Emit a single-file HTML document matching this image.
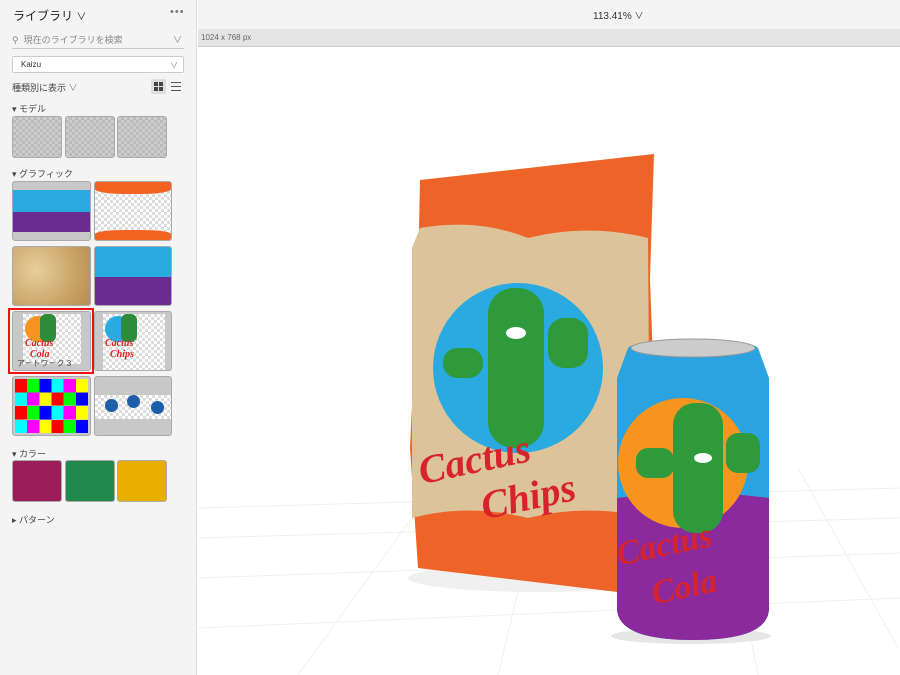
<!DOCTYPE html>
<html><head><meta charset="utf-8"><style>
*{margin:0;padding:0;box-sizing:border-box}
body{width:900px;height:675px;overflow:hidden;background:#fff;font-family:"Liberation Sans","Noto Sans CJK JP",sans-serif;position:relative;font-size:10px;color:#333}
.sb{position:absolute;left:0;top:0;width:197px;height:675px;background:#f4f4f4;border-right:1px solid #ddd}
.abs{position:absolute}
.t{border-radius:3px;border:1px solid #aaa;position:absolute;overflow:hidden;background:#c8c8c8}
.chk{background-color:#ccc;background-image:linear-gradient(45deg,#bbb 25%,transparent 25%,transparent 75%,#bbb 75%),linear-gradient(45deg,#bbb 25%,transparent 25%,transparent 75%,#bbb 75%);background-size:6px 6px;background-position:0 0,3px 3px}
.chkw{background-color:#fff;background-image:linear-gradient(45deg,#ddd 25%,transparent 25%,transparent 75%,#ddd 75%),linear-gradient(45deg,#ddd 25%,transparent 25%,transparent 75%,#ddd 75%);background-size:6px 6px;background-position:0 0,3px 3px}
.lbl{position:absolute;left:12px;font-size:9px;color:#444}
</style></head><body>
<div class="sb">
 <div class="abs" style="left:13px;top:7px;font-size:12px;color:#222">ライブラリ <span style="font-size:10px">∨</span></div>
 <div class="abs" style="left:170px;top:6px;font-size:11px;color:#777;letter-spacing:1px">•••</div>
 <div class="abs" style="left:12px;top:33px;width:172px;height:16px;border-bottom:1px solid #ccc;font-size:9px;color:#888">⚲ &nbsp;現在のライブラリを検索<span style="position:absolute;right:2px">∨</span></div>
 <div class="abs" style="left:12px;top:56px;width:172px;height:17px;border:1px solid #ccc;background:#fff;border-radius:2px;font-size:8px;color:#333;padding:3px 8px">Kaizu<span style="position:absolute;right:5px;color:#888">∨</span></div>
 <div class="abs" style="left:12px;top:81px;font-size:9px;color:#444">種類別に表示 <span style="color:#888">∨</span></div>
 <div class="abs" style="left:151px;top:79px;width:15px;height:15px;background:#ddd;border-radius:2px"></div>
 <div class="abs" style="left:154px;top:82px;width:9px;height:9px;background:linear-gradient(#444 0 4px,transparent 4px 5px,#444 5px);"></div>
 <div class="abs" style="left:158px;top:82px;width:1px;height:9px;background:#ddd"></div>
 <div class="abs" style="left:171px;top:82px;width:10px;height:9px;background:repeating-linear-gradient(#555 0 1px,transparent 1px 4px)"></div>
 <div class="lbl" style="top:102px">▾ モデル</div>
 <div class="t chk" style="left:12px;top:116px;width:50px;height:42px"></div>
 <div class="t chk" style="left:65px;top:116px;width:50px;height:42px"></div>
 <div class="t chk" style="left:117px;top:116px;width:50px;height:42px"></div>
 <div class="lbl" style="top:167px">▾ グラフィック</div>
 <div class="t" style="left:12px;top:181px;width:79px;height:60px"><div style="height:8px"></div><div style="height:22px;background:#29abe2"></div><div style="height:20px;background:#6a2c91"></div></div>
 <div class="t chkw" style="left:94px;top:181px;width:78px;height:60px"><div style="height:12px;background:#f26322;border-radius:0 0 40% 40%"></div><div style="position:absolute;bottom:0;left:0;right:0;height:10px;background:#f26322;border-radius:40% 40% 0 0"></div></div>
 <div class="t" style="left:12px;top:246px;width:79px;height:60px;background:radial-gradient(circle at 30% 40%,#e8cf9a,#c9a468 60%,#b58d50)"></div>
 <div class="t" style="left:94px;top:246px;width:78px;height:60px"><div style="height:30px;background:#29abe2"></div><div style="height:30px;background:#6a2c91"></div></div>
 <div class="t" style="left:12px;top:311px;width:79px;height:60px"><div class="chkw" style="position:absolute;left:10px;top:2px;width:58px;height:50px"></div><div style="position:absolute;left:12px;top:4px;width:26px;height:26px;border-radius:50%;background:#f7941d"></div><div style="position:absolute;left:27px;top:2px;width:16px;height:28px;border-radius:6px;background:#2e8b3a"></div><div style="position:absolute;left:12px;top:26px;color:#d22;font:italic bold 10px 'Liberation Serif',serif">Cactus<br>&nbsp;&nbsp;Cola</div><div style="position:absolute;left:4px;bottom:1px;font-size:8px;color:#444">アートワーク 3</div></div>
 <div class="abs" style="left:8px;top:308px;width:86px;height:66px;border:2px solid #e11"></div>
 <div class="t" style="left:94px;top:311px;width:78px;height:60px"><div class="chkw" style="position:absolute;left:8px;top:2px;width:62px;height:56px"></div><div style="position:absolute;left:10px;top:4px;width:26px;height:26px;border-radius:50%;background:#29abe2"></div><div style="position:absolute;left:26px;top:2px;width:16px;height:28px;border-radius:6px;background:#2e8b3a"></div><div style="position:absolute;left:10px;top:26px;color:#d22;font:italic bold 10px 'Liberation Serif',serif">Cactus<br>&nbsp;&nbsp;Chips</div></div>
 <div class="t" style="left:12px;top:376px;width:79px;height:60px;padding:2px"><div style="width:100%;height:100%;background:
 linear-gradient(90deg,#f00 0 16.6%,#0f0 0 33.3%,#00f 0 50%,#0ff 0 66.6%,#f0f 0 83.3%,#ff0 0) 0 0/100% 25% no-repeat,
 linear-gradient(90deg,#0ff 0 16.6%,#f0f 0 33.3%,#ff0 0 50%,#f00 0 66.6%,#0f0 0 83.3%,#00f 0) 0 33.3%/100% 25% no-repeat,
 linear-gradient(90deg,#f00 0 16.6%,#0f0 0 33.3%,#00f 0 50%,#0ff 0 66.6%,#f0f 0 83.3%,#ff0 0) 0 66.6%/100% 25% no-repeat,
 linear-gradient(90deg,#0ff 0 16.6%,#f0f 0 33.3%,#ff0 0 50%,#f00 0 66.6%,#0f0 0 83.3%,#00f 0) 0 100%/100% 25% no-repeat"></div></div>
 <div class="t" style="left:94px;top:376px;width:78px;height:60px"><div class="chkw" style="position:absolute;left:0;right:0;top:18px;height:24px"></div><div style="position:absolute;left:10px;top:22px;width:13px;height:13px;border-radius:50%;background:#1d5ea8"></div><div style="position:absolute;left:32px;top:18px;width:13px;height:13px;border-radius:50%;background:#1d5ea8"></div><div style="position:absolute;left:56px;top:24px;width:13px;height:13px;border-radius:50%;background:#1d5ea8"></div></div>
 <div class="lbl" style="top:447px">▾ カラー</div>
 <div class="t" style="left:12px;top:460px;width:50px;height:42px;background:#9b1e5a"></div>
 <div class="t" style="left:65px;top:460px;width:50px;height:42px;background:#1f8a4c"></div>
 <div class="t" style="left:117px;top:460px;width:50px;height:42px;background:#e8ae00"></div>
 <div class="lbl" style="top:513px">▸ パターン</div>
</div>
<div class="abs" style="left:198px;top:0;width:702px;height:29px;background:#f4f4f4"></div>
<div class="abs" style="left:593px;top:9px;font-size:10px;color:#333">113.41% <span style="font-size:9px">∨</span></div>
<div class="abs" style="left:198px;top:29px;width:702px;height:18px;background:#e4e4e4;border-bottom:1px solid #ccc;font-size:8px;color:#666;padding:4px 3px">1024 x 768 px</div>
<svg class="abs" style="left:198px;top:48px" width="702" height="627">
 <g stroke="#f0f0f0" stroke-width="1">
  <line x1="0" y1="460" x2="702" y2="440"/><line x1="0" y1="490" x2="702" y2="470"/><line x1="0" y1="530" x2="702" y2="505"/><line x1="0" y1="580" x2="702" y2="550"/>
  <line x1="100" y1="627" x2="250" y2="420"/><line x1="300" y1="627" x2="350" y2="420"/><line x1="560" y1="627" x2="520" y2="420"/><line x1="700" y1="600" x2="600" y2="420"/>
 </g>
 <ellipse cx="340" cy="530" rx="130" ry="14" fill="#f0f0f0"/>
 <ellipse cx="493" cy="588" rx="80" ry="8" fill="#e6e6e6"/>
 <!-- chip bag -->
 <path d="M222 132 L456 106 L452 230 L458 400 L452 548 L220 520 L212 400 L220 230Z" fill="#ee6428"/>
 <path d="M222 180 Q280 170 330 190 Q390 175 450 190 L452 470 Q390 455 330 470 Q270 455 214 470 L214 200Z" fill="#dcc39a"/>
 <circle cx="320" cy="320" r="85" fill="#29abe2"/>
 <rect x="290" y="240" width="56" height="160" rx="26" fill="#2e9a3c"/>
 <rect x="245" y="300" width="40" height="30" rx="14" fill="#2e9a3c"/>
 <rect x="350" y="270" width="40" height="50" rx="16" fill="#2e9a3c"/>
 <ellipse cx="318" cy="285" rx="10" ry="6" fill="#fff"/>
 <text x="222" y="420" font-family="Liberation Serif" font-style="italic" font-weight="bold" font-size="40" fill="#d8232a" transform="rotate(-12 300 420)">Cactus</text>
 <text x="285" y="460" font-family="Liberation Serif" font-style="italic" font-weight="bold" font-size="40" fill="#d8232a" transform="rotate(-12 340 460)">Chips</text>
 <!-- can -->
 <path d="M430 300 Q435 293 495 293 Q555 293 560 300 L571 330 L571 560 Q571 592 495 592 Q419 592 419 560 L419 330Z" fill="#2aa3e0"/>
 <ellipse cx="495" cy="300" rx="62" ry="9" fill="#ccc" stroke="#999"/>
 <path d="M419 450 Q495 440 571 450 L571 560 Q571 592 495 592 Q419 592 419 560Z" fill="#8a2a9c"/>
 <circle cx="485" cy="415" r="65" fill="#f7941d"/>
 <rect x="475" y="355" width="50" height="130" rx="22" fill="#2e9a3c"/>
 <rect x="438" y="400" width="38" height="30" rx="12" fill="#2e9a3c"/>
 <rect x="528" y="385" width="34" height="40" rx="12" fill="#2e9a3c"/>
 <ellipse cx="505" cy="410" rx="9" ry="5" fill="#fff"/>
 <text x="420" y="505" font-family="Liberation Serif" font-style="italic" font-weight="bold" font-size="34" fill="#d8232a" transform="rotate(-12 480 505)">Cactus</text>
 <text x="455" y="545" font-family="Liberation Serif" font-style="italic" font-weight="bold" font-size="34" fill="#d8232a" transform="rotate(-12 510 545)">Cola</text>
</svg>
</body></html>
